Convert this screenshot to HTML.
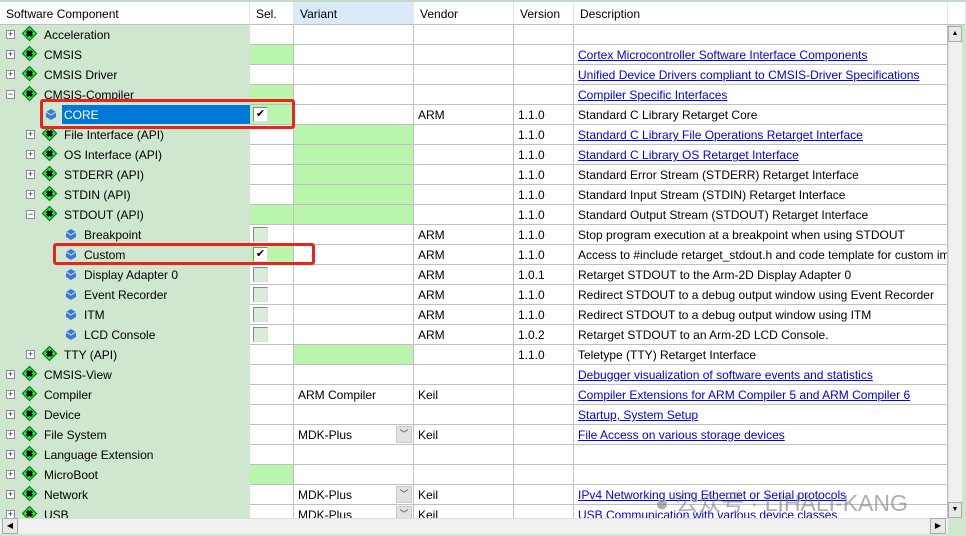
<!DOCTYPE html>
<html><head><meta charset="utf-8"><style>
*{margin:0;padding:0;box-sizing:border-box}
body{width:966px;height:536px;overflow:hidden;background:#fff;font-family:"Liberation Sans",sans-serif;font-size:12px;color:#000;position:relative}
#top{position:absolute;left:0;top:0;width:966px;height:2px;background:#c8d8c8}
.h{position:absolute;top:2px;height:23px;line-height:24px;padding-left:6px;border-right:1px solid #e4e4e4;border-bottom:1px solid #c0c0c0;background:#fff}
.r{position:absolute;left:0;width:948px;height:20px}
.c{position:absolute;top:0;height:20px;line-height:21px;border-right:1px solid #c0c0c0;border-bottom:1px solid #c0c0c0;padding-left:4px;white-space:nowrap;overflow:hidden}
.c0{left:0;width:250px;background:#cfe7cf;border:none;padding:0}
.c1{left:250px;width:44px}
.c2{left:294px;width:120px}
.c3{left:414px;width:100px}
.c4{left:514px;width:60px}
.c5{left:574px;width:374px}
.g{background:#b9f5ac}
a{color:#0000ee;text-decoration:underline}
.t{position:absolute;top:0;line-height:21px}
.ex{position:absolute;top:5px;width:9px;height:9px;border:1px solid #8c8c9c;background:#fff;font-size:9px;line-height:7px;text-align:center;color:#223}
.dm{position:absolute;top:3px;width:11px;height:11px;transform:rotate(45deg);background:#22ee22;border:1px solid #063}
.dm:after{content:"";position:absolute;left:3px;top:3px;width:3px;height:3px;background:#000;box-shadow:-2px 0 0 #000,2px 0 0 #000,0 -2px 0 #000,0 2px 0 #000}
.bl{position:absolute;top:3px}
.cb{position:absolute;left:3px;top:2px;width:15px;height:15px;border:1px solid #888;border-right-color:#ddd;border-bottom-color:#ddd;background:#d9ecd9;font-size:11px;line-height:13px;text-align:center}
.dd{position:absolute;right:1px;top:1px;width:16px;height:17px;background:#e2e2e2;border:1px solid #c8c8c8;font-size:9px;text-align:center;line-height:15px;color:#444}
.sel{position:absolute;left:62px;top:0;width:188px;height:19px;background:#0078d7;color:#fff;padding-left:2px;line-height:21px}
.vl{position:absolute;border-left:1px dotted #9a9a9a}
.red{position:absolute;border:3px solid #e8251c;border-radius:3px}
</style></head><body>
<div id="top"></div>
<div class="h" style="left:0;width:250px">Software Component</div>
<div class="h" style="left:250px;width:44px">Sel.</div>
<div class="h" style="left:294px;width:120px;background:#d9eaf8">Variant</div>
<div class="h" style="left:414px;width:100px">Vendor</div>
<div class="h" style="left:514px;width:60px">Version</div>
<div class="h" style="left:574px;width:374px">Description</div>
<div class="h" style="left:948px;width:18px;padding:0"></div>

<div style="position:absolute;left:0;top:25px;width:948px;height:493px;overflow:hidden">
<div class="c0" style="position:absolute;top:0;height:500px"></div>
<div class="vl" style="left:15px;top:0;height:500px"></div>
<div class="vl" style="left:35px;top:80px;height:260px"></div>
<div class="vl" style="left:51px;top:200px;height:120px"></div>

<div class="r" style="top:0"><div class="c c0"><div class="ex" style="left:6px">+</div><div class="dm" style="left:24px"></div><span class="t" style="left:44px">Acceleration</span></div><div class="c c1"></div><div class="c c2"></div><div class="c c3"></div><div class="c c4"></div><div class="c c5"></div></div>
<div class="r" style="top:20px"><div class="c c0"><div class="ex" style="left:6px">+</div><div class="dm" style="left:24px"></div><span class="t" style="left:44px">CMSIS</span></div><div class="c c1 g"></div><div class="c c2"></div><div class="c c3"></div><div class="c c4"></div><div class="c c5"><a>Cortex Microcontroller Software Interface Components</a></div></div>
<div class="r" style="top:40px"><div class="c c0"><div class="ex" style="left:6px">+</div><div class="dm" style="left:24px"></div><span class="t" style="left:44px">CMSIS Driver</span></div><div class="c c1"></div><div class="c c2"></div><div class="c c3"></div><div class="c c4"></div><div class="c c5"><a>Unified Device Drivers compliant to CMSIS-Driver Specifications</a></div></div>
<div class="r" style="top:60px"><div class="c c0"><div class="ex" style="left:6px">−</div><div class="dm" style="left:24px"></div><span class="t" style="left:44px">CMSIS-Compiler</span></div><div class="c c1 g"></div><div class="c c2"></div><div class="c c3"></div><div class="c c4"></div><div class="c c5"><a>Compiler Specific Interfaces</a></div></div>
<div class="r" style="top:80px"><div class="c c0"><svg class="bl" style="left:45px" width="12" height="13"><path d="M6 1 L11 4 L11 9 L6 12 L1 9 L1 4Z" fill="#3a78d8"/><path d="M1 4 L6 7 L11 4" stroke="#cfe2ff" fill="none"/></svg><div class="sel">CORE</div></div><div class="c c1 g"><div class="cb" style="background:#fff">✔</div></div><div class="c c2"></div><div class="c c3">ARM</div><div class="c c4">1.1.0</div><div class="c c5">Standard C Library Retarget Core</div></div>
<div class="r" style="top:100px"><div class="c c0"><div class="ex" style="left:26px">+</div><div class="dm" style="left:44px"></div><span class="t" style="left:64px">File Interface (API)</span></div><div class="c c1"></div><div class="c c2 g"></div><div class="c c3"></div><div class="c c4">1.1.0</div><div class="c c5"><a>Standard C Library File Operations Retarget Interface</a></div></div>
<div class="r" style="top:120px"><div class="c c0"><div class="ex" style="left:26px">+</div><div class="dm" style="left:44px"></div><span class="t" style="left:64px">OS Interface (API)</span></div><div class="c c1"></div><div class="c c2 g"></div><div class="c c3"></div><div class="c c4">1.1.0</div><div class="c c5"><a>Standard C Library OS Retarget Interface</a></div></div>
<div class="r" style="top:140px"><div class="c c0"><div class="ex" style="left:26px">+</div><div class="dm" style="left:44px"></div><span class="t" style="left:64px">STDERR (API)</span></div><div class="c c1"></div><div class="c c2 g"></div><div class="c c3"></div><div class="c c4">1.1.0</div><div class="c c5">Standard Error Stream (STDERR) Retarget Interface</div></div>
<div class="r" style="top:160px"><div class="c c0"><div class="ex" style="left:26px">+</div><div class="dm" style="left:44px"></div><span class="t" style="left:64px">STDIN (API)</span></div><div class="c c1"></div><div class="c c2 g"></div><div class="c c3"></div><div class="c c4">1.1.0</div><div class="c c5">Standard Input Stream (STDIN) Retarget Interface</div></div>
<div class="r" style="top:180px"><div class="c c0"><div class="ex" style="left:26px">−</div><div class="dm" style="left:44px"></div><span class="t" style="left:64px">STDOUT (API)</span></div><div class="c c1 g"></div><div class="c c2 g"></div><div class="c c3"></div><div class="c c4">1.1.0</div><div class="c c5">Standard Output Stream (STDOUT) Retarget Interface</div></div>
<div class="r" style="top:200px"><div class="c c0"><svg class="bl" style="left:65px" width="12" height="13"><path d="M6 1 L11 4 L11 9 L6 12 L1 9 L1 4Z" fill="#3a78d8"/><path d="M1 4 L6 7 L11 4" stroke="#cfe2ff" fill="none"/></svg><span class="t" style="left:84px">Breakpoint</span></div><div class="c c1"><div class="cb"></div></div><div class="c c2"></div><div class="c c3">ARM</div><div class="c c4">1.1.0</div><div class="c c5">Stop program execution at a breakpoint when using STDOUT</div></div>
<div class="r" style="top:220px"><div class="c c0"><svg class="bl" style="left:65px" width="12" height="13"><path d="M6 1 L11 4 L11 9 L6 12 L1 9 L1 4Z" fill="#3a78d8"/><path d="M1 4 L6 7 L11 4" stroke="#cfe2ff" fill="none"/></svg><span class="t" style="left:84px">Custom</span></div><div class="c c1 g"><div class="cb" style="background:#fff">✔</div></div><div class="c c2"></div><div class="c c3">ARM</div><div class="c c4">1.1.0</div><div class="c c5">Access to #include retarget_stdout.h and code template for custom implementation</div></div>
<div class="r" style="top:240px"><div class="c c0"><svg class="bl" style="left:65px" width="12" height="13"><path d="M6 1 L11 4 L11 9 L6 12 L1 9 L1 4Z" fill="#3a78d8"/><path d="M1 4 L6 7 L11 4" stroke="#cfe2ff" fill="none"/></svg><span class="t" style="left:84px">Display Adapter 0</span></div><div class="c c1"><div class="cb"></div></div><div class="c c2"></div><div class="c c3">ARM</div><div class="c c4">1.0.1</div><div class="c c5">Retarget STDOUT to the Arm-2D Display Adapter 0</div></div>
<div class="r" style="top:260px"><div class="c c0"><svg class="bl" style="left:65px" width="12" height="13"><path d="M6 1 L11 4 L11 9 L6 12 L1 9 L1 4Z" fill="#3a78d8"/><path d="M1 4 L6 7 L11 4" stroke="#cfe2ff" fill="none"/></svg><span class="t" style="left:84px">Event Recorder</span></div><div class="c c1"><div class="cb"></div></div><div class="c c2"></div><div class="c c3">ARM</div><div class="c c4">1.1.0</div><div class="c c5">Redirect STDOUT to a debug output window using Event Recorder</div></div>
<div class="r" style="top:280px"><div class="c c0"><svg class="bl" style="left:65px" width="12" height="13"><path d="M6 1 L11 4 L11 9 L6 12 L1 9 L1 4Z" fill="#3a78d8"/><path d="M1 4 L6 7 L11 4" stroke="#cfe2ff" fill="none"/></svg><span class="t" style="left:84px">ITM</span></div><div class="c c1"><div class="cb"></div></div><div class="c c2"></div><div class="c c3">ARM</div><div class="c c4">1.1.0</div><div class="c c5">Redirect STDOUT to a debug output window using ITM</div></div>
<div class="r" style="top:300px"><div class="c c0"><svg class="bl" style="left:65px" width="12" height="13"><path d="M6 1 L11 4 L11 9 L6 12 L1 9 L1 4Z" fill="#3a78d8"/><path d="M1 4 L6 7 L11 4" stroke="#cfe2ff" fill="none"/></svg><span class="t" style="left:84px">LCD Console</span></div><div class="c c1"><div class="cb"></div></div><div class="c c2"></div><div class="c c3">ARM</div><div class="c c4">1.0.2</div><div class="c c5">Retarget STDOUT to an Arm-2D LCD Console.</div></div>
<div class="r" style="top:320px"><div class="c c0"><div class="ex" style="left:26px">+</div><div class="dm" style="left:44px"></div><span class="t" style="left:64px">TTY (API)</span></div><div class="c c1"></div><div class="c c2 g"></div><div class="c c3"></div><div class="c c4">1.1.0</div><div class="c c5">Teletype (TTY) Retarget Interface</div></div>
<div class="r" style="top:340px"><div class="c c0"><div class="ex" style="left:6px">+</div><div class="dm" style="left:24px"></div><span class="t" style="left:44px">CMSIS-View</span></div><div class="c c1"></div><div class="c c2"></div><div class="c c3"></div><div class="c c4"></div><div class="c c5"><a>Debugger visualization of software events and statistics</a></div></div>
<div class="r" style="top:360px"><div class="c c0"><div class="ex" style="left:6px">+</div><div class="dm" style="left:24px"></div><span class="t" style="left:44px">Compiler</span></div><div class="c c1"></div><div class="c c2">ARM Compiler</div><div class="c c3">Keil</div><div class="c c4"></div><div class="c c5"><a>Compiler Extensions for ARM Compiler 5 and ARM Compiler 6</a></div></div>
<div class="r" style="top:380px"><div class="c c0"><div class="ex" style="left:6px">+</div><div class="dm" style="left:24px"></div><span class="t" style="left:44px">Device</span></div><div class="c c1"></div><div class="c c2"></div><div class="c c3"></div><div class="c c4"></div><div class="c c5"><a>Startup, System Setup</a></div></div>
<div class="r" style="top:400px"><div class="c c0"><div class="ex" style="left:6px">+</div><div class="dm" style="left:24px"></div><span class="t" style="left:44px">File System</span></div><div class="c c1"></div><div class="c c2">MDK-Plus<div class="dd">﹀</div></div><div class="c c3">Keil</div><div class="c c4"></div><div class="c c5"><a>File Access on various storage devices</a></div></div>
<div class="r" style="top:420px"><div class="c c0"><div class="ex" style="left:6px">+</div><div class="dm" style="left:24px"></div><span class="t" style="left:44px">Language Extension</span></div><div class="c c1"></div><div class="c c2"></div><div class="c c3"></div><div class="c c4"></div><div class="c c5"></div></div>
<div class="r" style="top:440px"><div class="c c0"><div class="ex" style="left:6px">+</div><div class="dm" style="left:24px"></div><span class="t" style="left:44px">MicroBoot</span></div><div class="c c1 g"></div><div class="c c2"></div><div class="c c3"></div><div class="c c4"></div><div class="c c5"></div></div>
<div class="r" style="top:460px"><div class="c c0"><div class="ex" style="left:6px">+</div><div class="dm" style="left:24px"></div><span class="t" style="left:44px">Network</span></div><div class="c c1"></div><div class="c c2">MDK-Plus<div class="dd">﹀</div></div><div class="c c3">Keil</div><div class="c c4"></div><div class="c c5"><a>IPv4 Networking using Ethernet or Serial protocols</a></div></div>
<div class="r" style="top:480px"><div class="c c0"><div class="ex" style="left:6px">+</div><div class="dm" style="left:24px"></div><span class="t" style="left:44px">USB</span></div><div class="c c1"></div><div class="c c2">MDK-Plus<div class="dd">﹀</div></div><div class="c c3">Keil</div><div class="c c4"></div><div class="c c5"><a>USB Communication with various device classes</a></div></div>
<div style="position:absolute;left:655px;top:459px;font-size:23px;white-space:nowrap;color:rgba(120,120,120,.6);font-family:'Liberation Sans','Noto Sans CJK SC',sans-serif">● 公众号 · LIHALI-KANG</div>
</div>

<div style="position:absolute;left:948px;top:25px;width:18px;height:511px;background:#cfe7cf"></div>
<div style="position:absolute;left:948px;top:26px;width:14px;height:492px;background:#f0f0f0;border-left:1px solid #ddd"></div>
<div style="position:absolute;left:948px;top:26px;width:14px;height:16px;background:#e8e8e8;border:1px solid #aaa;font-size:7px;text-align:center;line-height:14px">▲</div>
<div style="position:absolute;left:948px;top:502px;width:14px;height:16px;background:#e8e8e8;border:1px solid #aaa;font-size:7px;text-align:center;line-height:14px">▼</div>
<div style="position:absolute;left:0;top:518px;width:948px;height:16px;background:#f0f0f0;border-top:1px solid #ddd"></div>
<div style="position:absolute;left:2px;top:518px;width:16px;height:16px;background:#e8e8e8;border:1px solid #aaa;font-size:8px;text-align:center;line-height:14px">◀</div>
<div style="position:absolute;left:930px;top:518px;width:16px;height:16px;background:#e8e8e8;border:1px solid #aaa;font-size:8px;text-align:center;line-height:14px">▶</div>
<div style="position:absolute;left:0;top:534px;width:966px;height:2px;background:#cfe7cf"></div>

<div class="red" style="left:40px;top:99px;width:255px;height:30px"></div>
<div class="red" style="left:53px;top:243px;width:262px;height:22px"></div>
</body></html>
